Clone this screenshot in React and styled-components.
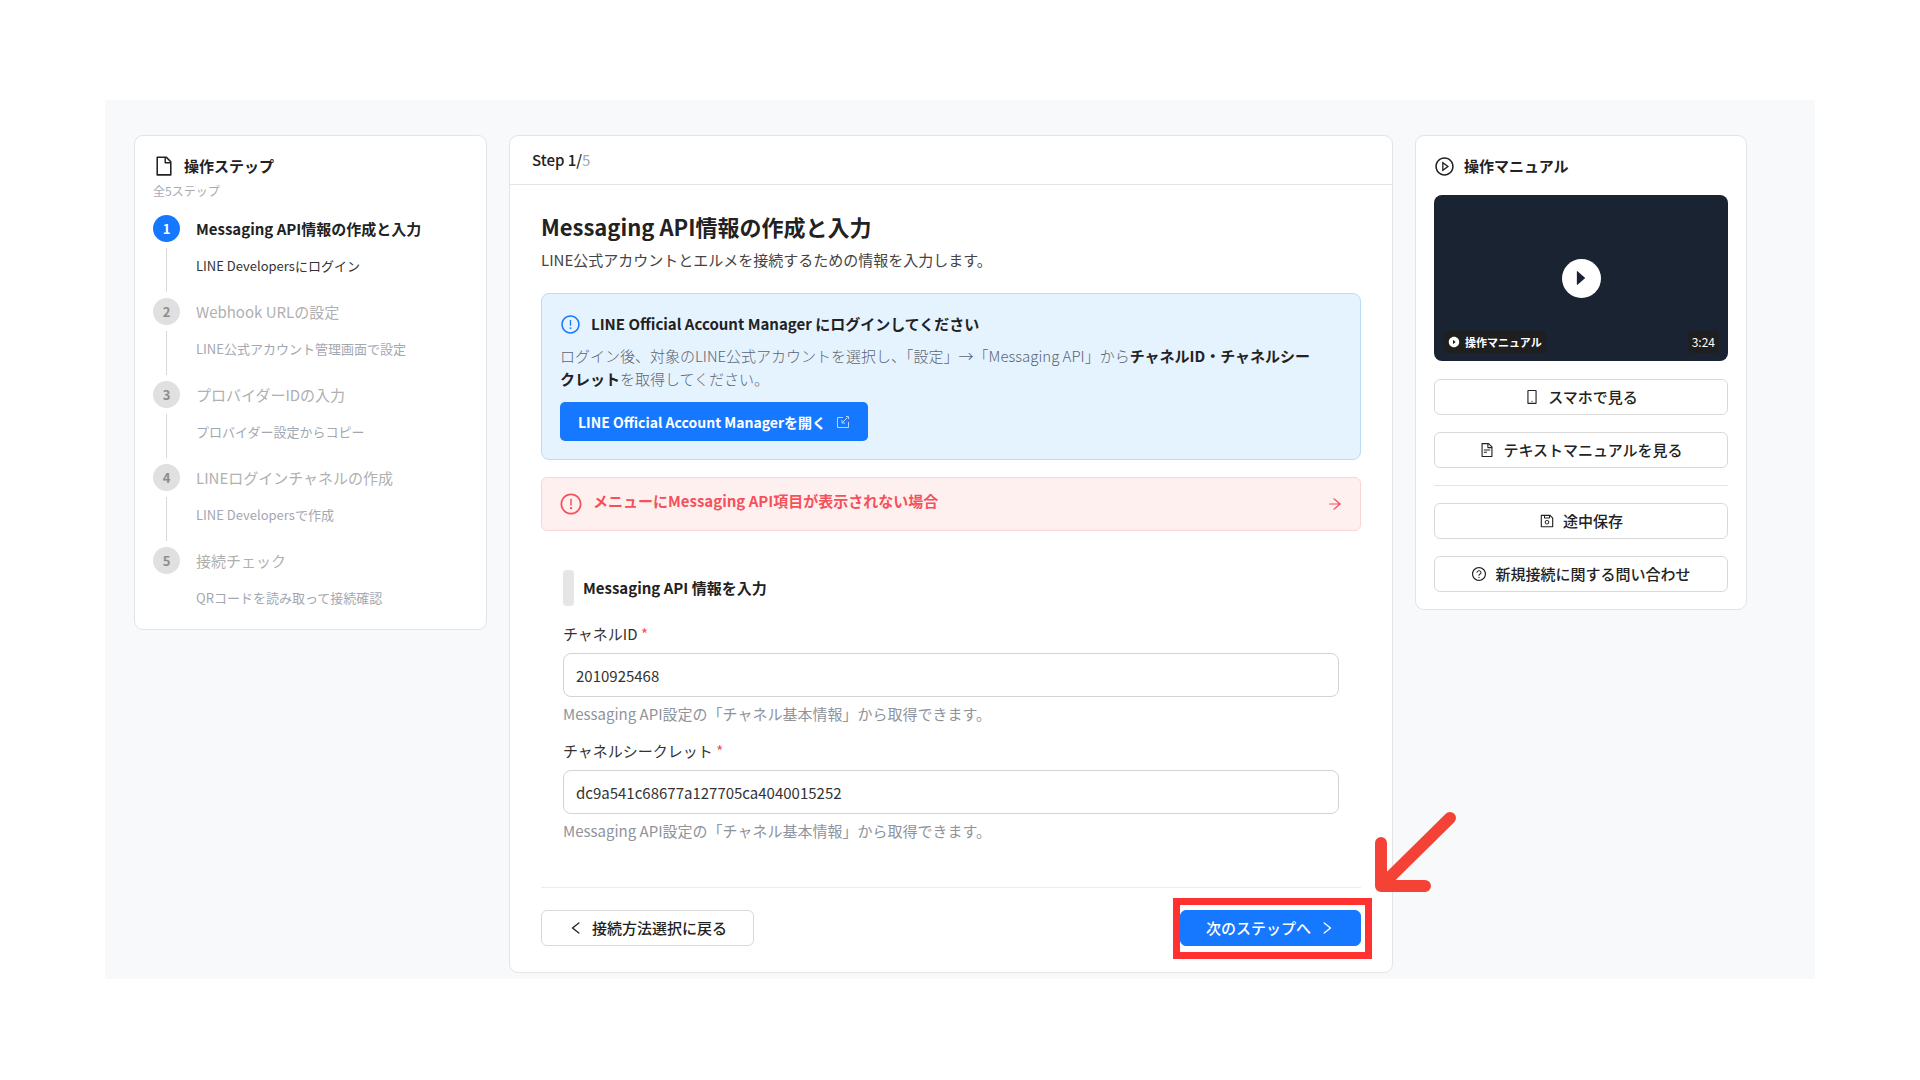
import React from "react";
import styled, { createGlobalStyle, css } from "styled-components";
import {
  AiOutlineFile,
  AiOutlinePlayCircle,
  AiFillPlayCircle,
  AiFillCaretRight,
  AiOutlineExclamationCircle,
  AiOutlineArrowRight,
  AiOutlineLeft,
  AiOutlineRight,
  AiOutlineMobile,
  AiOutlineFileText,
  AiOutlineSave,
  AiOutlineQuestionCircle,
} from "react-icons/ai";

const line = "#e2e4e8";
const ink = "#222";

const Global = createGlobalStyle`
  *, *::before, *::after { box-sizing: border-box; }
  body {
    margin: 0;
    background: #fff;
    color: ${ink};
    font-family: "Noto Sans CJK JP", "Noto Sans", sans-serif;
    font-size: 15px;
    line-height: 24px;
  }
  h1, h2, h3, p, ol { margin: 0; padding: 0; }
  button, input { font: inherit; color: inherit; }
  svg { flex: none; display: block; }
`;

const Page = styled.div`
  padding: 100px 105px;
`;

const Board = styled.div`
  display: grid;
  grid-template-columns: 353px minmax(0, 1fr) 332px;
  align-items: start;
  gap: 22px;
  padding: 35px 68px 6px 29px;
  background: #f8f9fb;
`;

const Card = styled.section`
  background: #fff;
  border: 1px solid ${line};
  border-radius: 9px;
`;

const StepsCard = styled(Card)`
  padding: 18px 18px 20px;
`;

const CardTitle = styled.h2`
  display: flex;
  align-items: center;
  gap: 9px;
  font-size: 15px;
  font-weight: 700;
  line-height: 24px;
`;

const StepsNote = styled.p`
  margin-bottom: 11px;
  color: #a8abb0;
  font-size: 12px;
  line-height: 26px;
`;

const StepList = styled.ol`
  list-style: none;
`;

const StepItem = styled.li`
  display: grid;
  grid-template-columns: 27px minmax(0, 1fr);
  column-gap: 16px;
  min-height: 83px;
  color: ${(p) => (p.$current ? ink : "#b0b0b0")};
  &:last-child { min-height: 0; }
`;

const StepRail = styled.div`
  display: flex;
  flex-direction: column;
  align-items: center;
`;

const StepNumber = styled.span`
  width: 27px;
  height: 27px;
  border-radius: 50%;
  background: ${(p) => (p.$current ? "#1677ff" : "#e0e0e0")};
  color: ${(p) => (p.$current ? "#fff" : "#8c8c8c")};
  font-size: 13px;
  font-weight: 700;
  line-height: 27px;
  text-align: center;
`;

const StepLine = styled.span`
  flex: 1;
  width: 1px;
  margin: 6px 0;
  background: #d9d9d9;
`;

const StepTitle = styled.h3`
  font-size: 15px;
  font-weight: ${(p) => (p.$current ? 700 : 400)};
  line-height: 27px;
`;

const StepText = styled.p`
  margin-top: 13px;
  color: ${(p) => (p.$current ? "#333" : "#a3a7b0")};
  font-size: 13px;
  line-height: 22px;
`;

const Progress = styled.header`
  padding: 12px 22px;
  border-bottom: 1px solid ${line};
  font-weight: 500;
  span { color: #a3a7b0; font-weight: 400; }
`;

const Content = styled.div`
  padding: 25px 31px 26px;
`;

const Heading = styled.h1`
  font-size: 22px;
  font-weight: 700;
  line-height: 32px;
`;

const Lead = styled.p`
  margin: 6px 0 21px;
  color: #444;
`;

const Notice = styled.div`
  padding: 18px;
  border: 1px solid #b9dcf7;
  border-radius: 8px;
  background: #e5f3ff;
`;

const NoticeTitle = styled.h2`
  display: flex;
  align-items: center;
  gap: 10px;
  font-size: 15px;
  font-weight: 700;
  svg { color: #1677ff; }
`;

const NoticeText = styled.p`
  margin: 8px 0 12px;
  padding-right: 24px;
  color: #5c6370;
  font-weight: 300;
  line-height: 23px;
  strong { color: ${ink}; font-weight: 700; }
`;

const ManagerLink = styled.a`
  display: inline-flex;
  align-items: center;
  gap: 10px;
  height: 39px;
  padding: 0 18px;
  border-radius: 5px;
  background: #1677ff;
  color: #fff;
  font-size: 14px;
  font-weight: 700;
  text-decoration: none;
  vertical-align: top;
`;

const Trouble = styled.button`
  display: flex;
  align-items: center;
  gap: 10px;
  width: 100%;
  height: 54px;
  margin-top: 17px;
  padding: 0 17px;
  border: 1px solid #fbd5d5;
  border-radius: 6px;
  background: #fff0f0;
  color: #f5515a;
  font-weight: 700;
  text-align: left;
  span { flex: 1; padding-bottom: 6px; }
`;

const Form = styled.form`
  padding: 39px 22px 44px;
`;

const FormTitle = styled.h2`
  display: flex;
  align-items: center;
  gap: 9px;
  margin-bottom: 16px;
  font-size: 15px;
  font-weight: 700;
  line-height: 36px;
  &::before {
    content: "";
    width: 11px;
    height: 36px;
    border-radius: 4px;
    background: #e6e6e6;
  }
`;

const Field = styled.div`
  & + & { margin-top: 13px; }
`;

const Label = styled.label`
  display: block;
  margin-bottom: 7px;
  color: #333;
  em { color: #ff4d4f; font-style: normal; }
`;

const Input = styled.input`
  display: block;
  width: 100%;
  height: 44px;
  padding: 0 12px;
  border: 1px solid #d0d3d8;
  border-radius: 8px;
  background: #fff;
  color: #333;
`;

const Hint = styled.p`
  margin-top: 5px;
  color: #8f939b;
`;

const Footer = styled.footer`
  display: flex;
  justify-content: space-between;
  padding-top: 22px;
  border-top: 1px solid #ececee;
`;

const buttonBox = css`
  display: flex;
  align-items: center;
  justify-content: center;
  gap: 8px;
  height: 36px;
  border: 1px solid #d9d9d9;
  border-radius: 6px;
  background: #fff;
  font-weight: 500;
`;

const BackButton = styled.button`
  ${buttonBox}
  padding: 0 26px;
`;

const NextButton = styled.button`
  ${buttonBox}
  padding: 0 25px;
  border-color: #1677ff;
  background: #1677ff;
  color: #fff;
`;

const NextWrap = styled.div`
  position: relative;
`;

const Highlight = styled.span`
  position: absolute;
  inset: -12px -11px -13px -7px;
  border: 7px solid #ff3131;
  pointer-events: none;
`;

const Pointer = styled.svg`
  position: absolute;
  right: -96px;
  bottom: 53px;
`;

const ManualCard = styled(Card)`
  padding: 18px 18px 17px;
`;

const Video = styled.div`
  position: relative;
  display: flex;
  align-items: center;
  justify-content: center;
  height: 166px;
  margin: 17px 0 18px;
  border-radius: 8px;
  background: #1a2332;
`;

const PlayButton = styled.button`
  display: flex;
  align-items: center;
  justify-content: center;
  width: 39px;
  height: 39px;
  padding: 0;
  border: 0;
  border-radius: 50%;
  background: #fff;
  color: #1a2332;
`;

const VideoTag = styled.span`
  position: absolute;
  bottom: 8px;
  ${(p) => (p.$right ? "right: 9px" : "left: 10px")};
  display: flex;
  align-items: center;
  gap: 5px;
  padding: 0 4px;
  border-radius: 4px;
  background: #1f1f1f;
  color: #fff;
  font-size: ${(p) => (p.$right ? 12 : 11)}px;
  font-weight: ${(p) => (p.$right ? 400 : 700)};
  line-height: 22px;
`;

const ManualActions = styled.div`
  display: grid;
  gap: 17px;
`;

const ManualButton = styled.button`
  ${buttonBox}
  width: 100%;
`;

const Divider = styled.hr`
  width: 100%;
  height: 1px;
  margin: 0;
  border: 0;
  background: ${line};
`;

const steps = [
  ["Messaging API情報の作成と入力", "LINE Developersにログイン"],
  ["Webhook URLの設定", "LINE公式アカウント管理画面で設定"],
  ["プロバイダーIDの入力", "プロバイダー設定からコピー"],
  ["LINEログインチャネルの作成", "LINE Developersで作成"],
  ["接続チェック", "QRコードを読み取って接続確認"],
];

const fields = [
  ["channel-id", "チャネルID", "2010925468"],
  ["channel-secret", "チャネルシークレット", "dc9a541c68677a127705ca4040015252"],
];

function OpenIcon() {
  return (
    <svg width="14" height="14" viewBox="0 0 14 14" fill="none" stroke="#b5d3ff" aria-hidden="true">
      <path d="M7 2.5H1.5v10h11V7M6 5v3h3M6.5 7.5l5-5M10 1.5h2.5V4" />
    </svg>
  );
}

function StepsPanel() {
  return (
    <StepsCard>
      <CardTitle>
        <AiOutlineFile size={22} />
        操作ステップ
      </CardTitle>
      <StepsNote>全5ステップ</StepsNote>
      <StepList>
        {steps.map(([title, text], i) => (
          <StepItem key={title} $current={i === 0}>
            <StepRail>
              <StepNumber $current={i === 0}>{i + 1}</StepNumber>
              {i < steps.length - 1 && <StepLine />}
            </StepRail>
            <div>
              <StepTitle $current={i === 0}>{title}</StepTitle>
              <StepText $current={i === 0}>{text}</StepText>
            </div>
          </StepItem>
        ))}
      </StepList>
    </StepsCard>
  );
}

function MainPanel() {
  return (
    <Card as="main">
      <Progress>
        Step 1/<span>5</span>
      </Progress>
      <Content>
        <Heading>Messaging API情報の作成と入力</Heading>
        <Lead>LINE公式アカウントとエルメを接続するための情報を入力します。</Lead>
        <Notice>
          <NoticeTitle>
            <AiOutlineExclamationCircle size={21} />
            LINE Official Account Manager にログインしてください
          </NoticeTitle>
          <NoticeText>
            ログイン後、対象のLINE公式アカウントを選択し、「設定」→「Messaging API」から
            <strong>チャネルID・チャネルシークレット</strong>を取得してください。
          </NoticeText>
          <ManagerLink href="#manager">
            LINE Official Account Managerを開く
            <OpenIcon />
          </ManagerLink>
        </Notice>
        <Trouble type="button">
          <AiOutlineExclamationCircle size={24} />
          <span>メニューにMessaging API項目が表示されない場合</span>
          <AiOutlineArrowRight size={16} />
        </Trouble>
        <Form>
          <FormTitle>Messaging API 情報を入力</FormTitle>
          {fields.map(([id, label, value]) => (
            <Field key={id}>
              <Label htmlFor={id}>
                {label} <em>*</em>
              </Label>
              <Input id={id} type="text" defaultValue={value} />
              <Hint>Messaging API設定の「チャネル基本情報」から取得できます。</Hint>
            </Field>
          ))}
        </Form>
        <Footer>
          <BackButton type="button">
            <AiOutlineLeft size={16} />
            接続方法選択に戻る
          </BackButton>
          <NextWrap>
            <NextButton type="button">
              次のステップへ
              <AiOutlineRight size={16} />
            </NextButton>
            <Highlight />
            <Pointer width="82" height="82" viewBox="0 0 82 82" fill="none" stroke="#f44336" strokeWidth="12" strokeLinecap="round" strokeLinejoin="round" aria-hidden="true">
              <path d="M75 7 6 75M6 32v43h44" />
            </Pointer>
          </NextWrap>
        </Footer>
      </Content>
    </Card>
  );
}

function ManualPanel() {
  return (
    <ManualCard as="aside">
      <CardTitle>
        <AiOutlinePlayCircle size={21} />
        操作マニュアル
      </CardTitle>
      <Video>
        <PlayButton type="button" aria-label="操作マニュアル">
          <AiFillCaretRight size={20} />
        </PlayButton>
        <VideoTag>
          <AiFillPlayCircle size={12} />
          操作マニュアル
        </VideoTag>
        <VideoTag $right>3:24</VideoTag>
      </Video>
      <ManualActions>
        <ManualButton type="button">
          <AiOutlineMobile size={16} />
          スマホで見る
        </ManualButton>
        <ManualButton type="button">
          <AiOutlineFileText size={16} />
          テキストマニュアルを見る
        </ManualButton>
        <Divider />
        <ManualButton type="button">
          <AiOutlineSave size={16} />
          途中保存
        </ManualButton>
        <ManualButton type="button">
          <AiOutlineQuestionCircle size={16} />
          新規接続に関する問い合わせ
        </ManualButton>
      </ManualActions>
    </ManualCard>
  );
}

export default function App() {
  return (
    <>
      <Global />
      <Page>
        <Board>
          <StepsPanel />
          <MainPanel />
          <ManualPanel />
        </Board>
      </Page>
    </>
  );
}
